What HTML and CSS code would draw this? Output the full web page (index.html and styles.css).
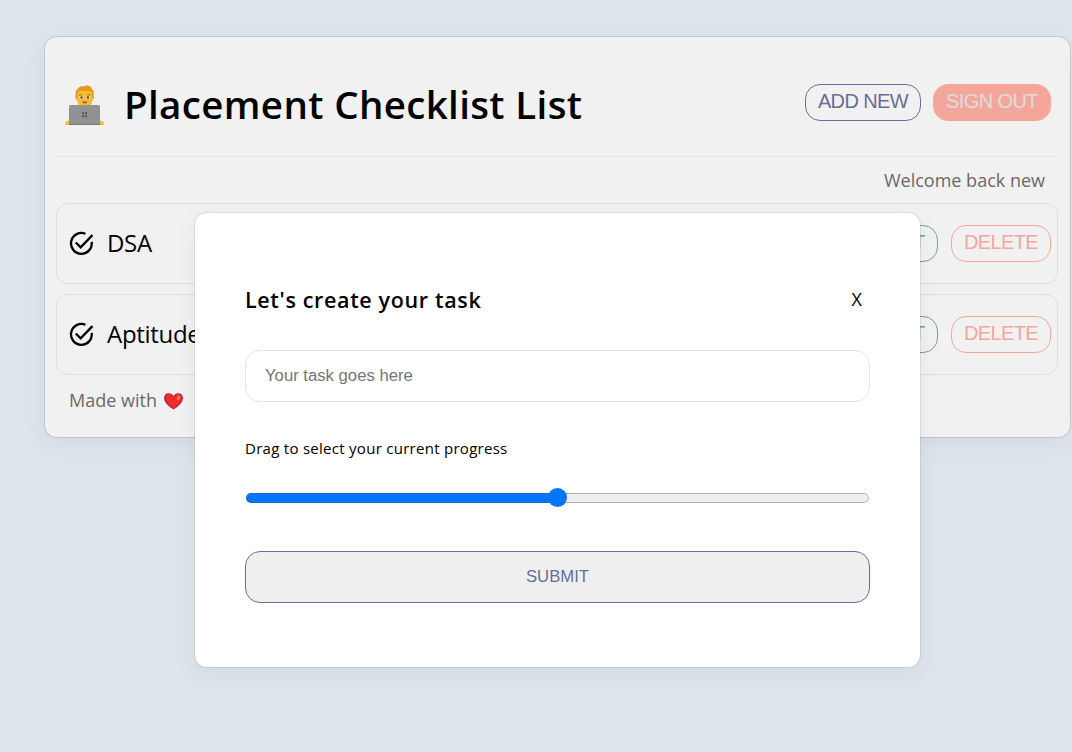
FILE: index.html
```html
<!DOCTYPE html>
<html lang="en">
<head>
<meta charset="utf-8">
<title>Placement Checklist List</title>
<link rel="stylesheet" href="styles.css">
</head>
<body>
<main class="app">
  <header class="header">
    <h1 class="title">
      <svg class="coder" viewBox="0 0 39 40" aria-hidden="true">
        <path d="M0 40v-1.500q1-3 4-3h31q3 0 4 3V40z" fill="#f5bd3e"/>
        <path d="M10.500 14V8q0-2.500 1.500-3.500 1.500-3 5-3.500l2 .5L22 .3q4 .7 5 3.700 2 1 1.700 4.500V14z" fill="#e8961e"/>
        <path d="M12.500 9q0-3 3-3h8q3.500 0 3.500 3v4h1v3h-1q0 6-7.300 6t-7.200-6h-1v-3h1z" fill="#f5bd2e"/>
        <path d="M14 10.200q1.500-1.300 3 0m5.500 0q1.500-1.300 3 0" stroke="#a36a25" fill="none"/>
        <ellipse cx="16.300" cy="12.500" rx="1.900" ry="1.500" fill="#fff"/><ellipse cx="23.300" cy="12.500" rx="1.900" ry="1.500" fill="#fff"/>
        <circle cx="16.500" cy="12.500" r="1.200" fill="#493454"/><circle cx="23" cy="12.500" r="1.200" fill="#493454"/>
        <path d="M17 16.500h5.500q-.8 2-2.800 2t-2.700-2z" fill="#cf3d42"/>
        <path d="M4 22q0-2 1.500-2h28q1.500 0 1.500 2v17H4z" fill="#929292"/>
        <path d="M4 39h31v1H4z" fill="#777"/>
        <path d="M17 27.300h2v2h-2zm3 0h2v2h-2zm-3 3h2v2h-2zm3 0h2v2h-2z" fill="#5d4b70"/>
      </svg>
      <span>Placement Checklist List</span>
    </h1>
    <div class="actions">
      <button class="btn create">ADD NEW</button>
      <button class="btn signout">SIGN OUT</button>
    </div>
  </header>
  <p class="welcome">Welcome back new</p>
  <ul class="list">
    <li class="item">
      <svg class="tick" viewBox="0 0 24 24" aria-hidden="true"><path d="M15.800 2.700A10 10 0 1 0 21.800 10.500M6.500 11l4.700 4.700L22.500 4" fill="none" stroke="#000" stroke-width="2.200"/></svg>
      <span class="task">DSA</span>
      <button class="btn edit">EDIT</button>
      <button class="btn delete">DELETE</button>
    </li>
    <li class="item">
      <svg class="tick" viewBox="0 0 24 24" aria-hidden="true"><path d="M15.800 2.700A10 10 0 1 0 21.800 10.500M6.500 11l4.700 4.700L22.500 4" fill="none" stroke="#000" stroke-width="2.200"/></svg>
      <span class="task">Aptitude</span>
      <button class="btn edit">EDIT</button>
      <button class="btn delete">DELETE</button>
    </li>
  </ul>
  <p class="footer"><span>Made with</span>
    <svg class="heart" viewBox="0 0 19 17" aria-hidden="true"><path d="M9.500 16.500Q0 10.500 0 5 .3.500 4.600.3 8 0 9.500 3 11 0 14.400.3 18.700.500 19 5q0 5.500-9.500 11.500z" fill="#c9184a"/><path d="M10 15.300Q1.500 9.500 1.500 5 2 1 5 1q3.500 0 4.700 3.300Q11 1 14.300 1 18 1.500 18 5q0 4.500-8 10.300z" fill="#ec2d2d"/><ellipse cx="14.500" cy="5" rx="1.700" ry="2.500" transform="rotate(30 14.500 5)" fill="#f37366"/></svg>
  </p>
</main>
<div class="overlay">
  <section class="modal">
    <div class="modal-head">
      <h3 class="modal-title">Let's create your task</h3>
      <button class="close">X</button>
    </div>
    <input class="field" placeholder="Your task goes here">
    <label class="label" for="range"><span>Drag to select your current progress</span></label>
    <input class="range" id="range" type="range" min="0" max="100" value="50">
    <button class="submit">SUBMIT</button>
  </section>
</div>
</body>
</html>
```
FILE: styles.css
```css
* { box-sizing: border-box; }
html { overflow: hidden; }
body {
  margin: 0;
  height: 752px;
  padding: 37px 0 0 45px;
  overflow: hidden;
  background: #dde4ec;
  font-family: "Trebuchet MS", "Open Sans", "Noto Sans", sans-serif;
}
.app, .modal {
  border-radius: 12px;
  box-shadow: rgba(0, 0, 0, .05) 0 6px 24px, rgba(0, 0, 0, .08) 0 0 0 1px;
}
.app {
  width: 1025px;
  height: 400px;
  padding: 0 12px 0 11px;
  background: #f1f1f1;
  box-shadow: rgba(0, 0, 0, .05) 0 6px 24px, rgba(40, 60, 85, .14) 0 0 0 1px;
}
.header {
  display: flex;
  justify-content: space-between;
  height: 120px;
  margin-right: 2px;
  padding: 47px 5px 0 9px;
  border-bottom: 1px solid #e5e5e5;
}
.title {
  display: flex;
  gap: 20px;
  margin: 0;
  font-size: 38.500px;
  font-weight: 600;
  line-height: 40px;
  letter-spacing: .35px;
  white-space: nowrap;
}
.coder { width: 39px; height: 40px; margin-top: 1px; }
.actions { display: flex; gap: 12px; }
.btn {
  height: 37px;
  padding: 0 0 3px;
  border: 1px solid;
  border-radius: 15px;
  background: transparent;
  font: 20px/30px "Liberation Sans", Arial, sans-serif;
  letter-spacing: -.6px;
  white-space: nowrap;
}
.create { width: 116px; color: #666f96; }
.signout { width: 118px; background: #f4a69b; border-color: #f4a69b; color: #ddd; }
.welcome {
  margin: 0;
  height: 46px;
  padding-right: 13px;
  color: #6a6a6a;
  font-size: 18px;
  line-height: 47px;
  text-align: right;
}
.list { display: grid; gap: 10px; margin: 0; padding: 0; list-style: none; }
.item {
  display: flex;
  align-items: center;
  width: 1002px;
  height: 81px;
  padding: 0 6px 0 12px;
  border: 1px solid #dfdfdf;
  border-radius: 12px;
}
.tick { width: 25px; height: 25px; margin-top: -1px; }
.task { flex: 1; margin: -2px 0 0 13px; font-size: 24px; letter-spacing: -.3px; }
.task:not(:empty) { white-space: nowrap; }
.edit { width: 70px; margin-right: 13px; color: #76a481; }
.delete { width: 100px; color: #f4a69b; }
.footer {
  display: flex;
  align-items: center;
  gap: 7px;
  height: 50px;
  margin: 0;
  padding-left: 13px;
  color: #6a6a6a;
  font-size: 18px;
}
.heart { width: 19px; height: 17px; margin-top: 2px; }
.overlay {
  position: absolute;
  inset: 213px 0 0 195px;
}
.modal {
  display: flex;
  flex-direction: column;
  width: 725px;
  height: 454px;
  padding: 69px 50px 0;
  background: #fff;
}
.modal-head { display: flex; justify-content: space-between; height: 68px; }
.modal-title { margin: 0; font-size: 21.500px; font-weight: 600; line-height: 36px; letter-spacing: .65px; }
.close {
  height: 34px;
  padding: 0 8px;
  border: 0;
  background: none;
  font: 18px/34px "Open Sans", sans-serif;
}
.field, .submit {
  height: 52px;
  border-radius: 15px;
  font: 16.700px "Liberation Sans", Arial, sans-serif;
}
.field { padding: 0 19px 1px; border: 1px solid #e5e5e9; }
.label { height: 86px; line-height: 92px; font-size: 15px; letter-spacing: .28px; }
.range {
  appearance: none;
  width: 623px;
  height: 20px;
  margin: 0 1px;
  background: none;
}
.range::-webkit-slider-runnable-track {
  height: 10px;
  border-radius: 5px;
  background:
    linear-gradient(#0075ff, #0075ff) 0 0 / 50% 100% no-repeat,
    #efefef;
  box-shadow: inset 0 0 0 1px rgba(80, 80, 80, .4);
}
.range::-webkit-slider-thumb {
  appearance: none;
  width: 19px;
  height: 19px;
  margin-top: -5px;
  border-radius: 50%;
  background: #0075ff;
}
.submit { margin-top: 43px; padding-bottom: 2px; border: 1px solid #666f96; background: #efefef; color: #666f96; }
```
